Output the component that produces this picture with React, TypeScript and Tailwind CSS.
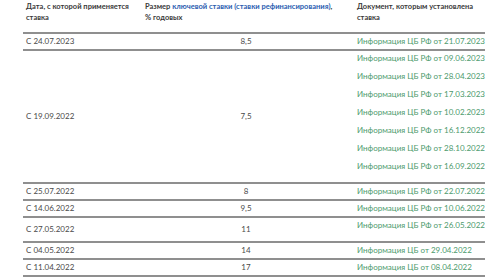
const rows = [
  { date: "С 24.07.2023", rate: "8,5", docs: ["Информация ЦБ РФ от 21.07.2023"] },
  {
    date: "С 19.09.2022",
    rate: "7,5",
    docs: [
      "Информация ЦБ РФ от 09.06.2023",
      "Информация ЦБ РФ от 28.04.2023",
      "Информация ЦБ РФ от 17.03.2023",
      "Информация ЦБ РФ от 10.02.2023",
      "Информация ЦБ РФ от 16.12.2022",
      "Информация ЦБ РФ от 28.10.2022",
      "Информация ЦБ РФ от 16.09.2022",
    ],
    spaced: true,
  },
  { date: "С 25.07.2022", rate: "8", docs: ["Информация ЦБ РФ от 22.07.2022"] },
  { date: "С 14.06.2022", rate: "9,5", docs: ["Информация ЦБ РФ от 10.06.2022"] },
  { date: "С 27.05.2022", rate: "11", docs: ["Информация ЦБ РФ от 26.05.2022"], spaced: true },
  { date: "С 04.05.2022", rate: "14", docs: ["Информация ЦБ от 29.04.2022"] },
  { date: "С 11.04.2022", rate: "17", docs: ["Информация ЦБ от 08.04.2022"] },
  {
    date: "С 28.02.2022",
    rate: "20",
    docs: ["Информация ЦБ от 18.03.2022", "Информация ЦБ от 28.02.2022"],
    spaced: true,
  },
];

export default function App() {
  return (
    <div className="w-[500px] h-[278px] overflow-hidden bg-white font-['Lato',sans-serif] text-[8px] leading-[11px]">
      <table className="ml-[23px] w-[462px] table-fixed border-collapse">
        <colgroup>
          <col className="w-[117px]" />
          <col className="w-[212px]" />
          <col className="w-[133px]" />
        </colgroup>
        <thead>
          <tr className="border-b-2 border-[#8f8f8f] align-top text-left text-[7.5px] font-bold text-[#3a3a3a]">
            <th className="pt-[1px] pb-[9px] pl-[3px] pr-0 font-bold">
              Дата, с которой применяется ставка
            </th>
            <th className="pt-[1px] pb-[9px] pl-[5px] pr-0 font-bold">
              Размер{" "}
              <span className="text-[#2a5db0]">
                ключевой ставки (ставки рефинансирования)
              </span>
              ,<br />% годовых
            </th>
            <th className="pt-[1px] pb-[9px] pl-[5px] pr-0 font-bold">
              Документ, которым установлена ставка
            </th>
          </tr>
        </thead>
        <tbody className="text-[#4a4a4a]">
          {rows.map((r) => (
            <tr key={r.date} className="border-b-2 border-[#8f8f8f]">
              <td className="pl-[3px] py-[2px] align-middle">{r.date}</td>
              <td className="py-[2px] text-center align-middle">{r.rate}</td>
              <td
                className={
                  "pl-[5px] pt-[2px] align-top whitespace-nowrap text-[#4c9a6c] " +
                  (r.spaced ? "pb-[3px]" : "pb-[2px]")
                }
              >
                {r.docs.map((d) => (
                  <div key={d} className={r.spaced ? "mb-[7px]" : ""}>
                    {d}
                  </div>
                ))}
              </td>
            </tr>
          ))}
        </tbody>
      </table>
    </div>
  );
}
